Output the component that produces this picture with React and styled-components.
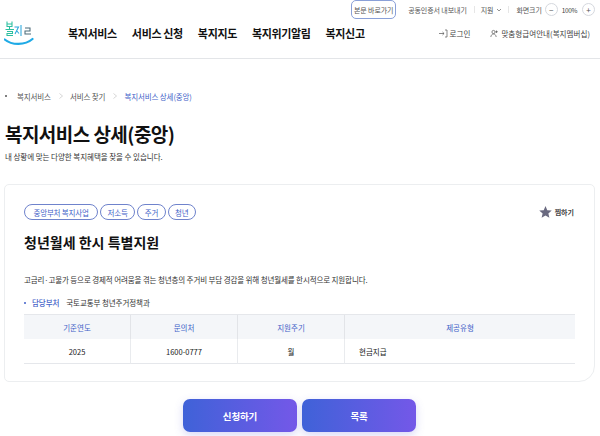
import React from 'react';
import styled, { createGlobalStyle } from 'styled-components';

const Global = createGlobalStyle`
  html, body { margin: 0; padding: 0; background: #fff; }
  body { font-family: "Noto Sans CJK KR", "Noto Sans", sans-serif; color: #111; width: 600px; height: 436px; overflow: hidden; }
`;
const Page = styled.div`width: 600px; height: 436px; overflow: hidden; display: flex; flex-direction: column;`;
const Header = styled.header`height: 58px; border-bottom: 1px solid #e3e5e8; display: flex; flex-direction: column; flex: none;`;
const Util = styled.div`height: 19px; display: flex; align-items: center; justify-content: flex-end; padding-right: 5px; font-size: 7px; color: #555; letter-spacing: -0.1px;`;
const SkipLink = styled.span`width: 43px; height: 17px; margin-right: 12px; border: 1px solid #8aa0d8; border-radius: 5px; display: flex; align-items: center; justify-content: center; color: #555;`;
const UtilItem = styled.span`margin-right: ${p => p.$mr}px; display: flex; align-items: center; gap: 3px;`;
const Sep = styled.i`width: 1px; height: 7px; background: #e6e6e6; margin-right: ${p => p.$mr}px;`;
const RoundBtn = styled.span`width: 11px; height: 11px; border: 1px solid #d5d8de; border-radius: 50%; display: flex; align-items: center; justify-content: center; font-size: 8px; line-height: 1; color: #555;`;
const Zoom = styled.span`margin: 0 5px 0 4px; color: #444; font-size: 6.5px; letter-spacing: -0.4px;`;
const Main = styled.div`flex: 1; display: flex; align-items: flex-start; padding-left: 4px;`;
const Logo = styled.svg`width: 31px; height: 28px; flex: none; margin-right: 33px;`;
const Nav = styled.nav`display: flex; gap: 15px; font-size: 11px; font-weight: 700; color: #111; height: 26px; align-items: center; letter-spacing: -0.35px; margin-top: 1px;`;
const Right = styled.div`margin-left: auto; display: flex; align-items: center; height: 26px; font-size: 7.5px; color: #444; padding-right: 10px; margin-top: 1px; letter-spacing: 0.05px;`;
const RightItem = styled.span`display: flex; align-items: center; gap: 2px; margin-left: ${p => p.$ml || 0}px;`;
const Crumbs = styled.div`display: flex; align-items: center; height: 12px; margin-top: 31px; padding-left: 5px; font-size: 7.5px; color: #555; letter-spacing: -0.12px; flex: none;`;
const Dot = styled.i`width: 2px; height: 2px; background: #555; border-radius: 50%; margin-right: 10px;`;
const Chev = styled.svg`width: 4px; height: 6px; margin: 0 7px 0 8px; flex: none;`;
const Current = styled.span`color: #3f5fc8;`;
const Title = styled.h1`margin: 19px 0 0 5px; font-size: 19px; line-height: 26px; font-weight: 700; color: #111; letter-spacing: -0.55px; flex: none;`;
const Sub = styled.p`margin: 4px 0 0 5px; font-size: 7.5px; line-height: 11px; color: #333; letter-spacing: -0.04px; flex: none;`;
const Card = styled.section`margin: 22px 5px 0 4px; height: 198px; box-sizing: border-box; border: 1px solid #eceef0; border-radius: 5px 5px 16px 5px; padding: 19px 19px 0 19px; flex: none;`;
const TopRow = styled.div`display: flex; align-items: center; height: 16px;`;
const Tags = styled.div`display: flex; gap: 2px;`;
const Tag = styled.span`height: 16px; box-sizing: border-box; padding: 0 ${p => p.$wide ? 8.5 : 6.5}px; border: 1px solid #6f83cc; border-radius: 8px; display: flex; align-items: center; font-size: 7.5px; color: #3f5fc8; letter-spacing: -0.2px;`;
const Fav = styled.span`margin-left: auto; display: flex; align-items: center; gap: 3px; font-size: 7px; font-weight: 700; color: #444; margin-right: 1px;`;
const Name = styled.h2`margin: 6px 0 0; font-size: 14px; line-height: 32px; font-weight: 700; color: #111;`;
const Desc = styled.p`margin: 16px 0 0; font-size: 7.5px; line-height: 12px; color: #333; white-space: nowrap; letter-spacing: -0.12px;`;
const Dept = styled.div`margin-top: 10px; display: flex; align-items: center; height: 12px; font-size: 7.5px; color: #333; letter-spacing: -0.08px;`;
const DeptLabel = styled.span`color: #3f5fc8; font-weight: 500; margin-right: 7px; &::before { content: ""; display: inline-block; width: 2px; height: 2px; border-radius: 50%; background: #3f5fc8; margin: 0 6px 2px 0; }`;
const Table = styled.div`margin-top: 6px; border-top: 1px solid #e5e7eb; display: grid; grid-template-columns: 106px 107px 107px 1fr; font-size: 7.5px;`;
const Th = styled.div`height: 24px; background: #f4f6f9; display: flex; align-items: center; justify-content: center; color: #3f5fc8; border-left: ${p => p.$first ? 'none' : '1px solid #e2e4e8'};`;
const Td = styled.div`height: 24px; display: flex; align-items: center; justify-content: ${p => p.$left ? 'flex-start' : 'center'}; padding-left: ${p => p.$left ? '14px' : '0'}; color: #222; border-bottom: 1px solid #e5e7eb; border-left: ${p => p.$first ? 'none' : '1px solid #e9ebee'};`;
const Buttons = styled.div`margin-top: 17px; display: flex; gap: 5px; padding-left: 183px; flex: none;`;
const Btn = styled.button`width: 114px; height: 33px; border: none; border-radius: 7px; background: linear-gradient(90deg, #3f62d8, #7458e8); color: #fff; font: 700 9.5px "Noto Sans CJK KR", sans-serif; letter-spacing: -0.15px; box-shadow: 0 3px 8px rgba(100, 100, 220, .25);`;

const ChevIcon = () => (
  <Chev viewBox="0 0 4 6"><path d="M.5.5L3.500 3 .5 5.500" fill="none" stroke="#c4c4c4" strokeWidth=".7" /></Chev>
);

export default function App() {
  return (
    <Page>
      <Global />
      <Header>
        <Util>
          <SkipLink>본문 바로가기</SkipLink>
          <UtilItem $mr={7}>공동인증서 내보내기</UtilItem>
          <Sep $mr={6} />
          <UtilItem $mr={6}>지원 <svg width="6" height="4" viewBox="0 0 6 4"><path d="M1 1l2 2 2-2" fill="none" stroke="#666" strokeWidth=".7" /></svg></UtilItem>
          <Sep $mr={7} />
          <UtilItem $mr={3}>화면크기</UtilItem>
          <RoundBtn>−</RoundBtn>
          <Zoom>100%</Zoom>
          <RoundBtn>+</RoundBtn>
        </Util>
        <Main>
          <Logo viewBox="0 0 31 28">
            <path d="M.7 20.500C8 26.500 21 26.500 28.500 20" fill="none" stroke="#1faae6" strokeWidth="2.200" strokeLinecap="round" />
            <path d="M3 2.500v5h5v-5M3 5h5M5.500 7.500v2.500M1.500 10.500h8.500M3 12.500h5.500v2H3v2h6" fill="none" stroke="#2cbfa0" strokeWidth="1.050" />
            <path d="M10.500 8h4l-3.500 7M12.500 11.500l2.500 3M17 6v11" fill="none" stroke="#2ba7dc" strokeWidth="1.050" />
            <path d="M21 9h5v3h-5v3h6" fill="none" stroke="#4a6a78" strokeWidth="1.050" />
          </Logo>
          <Nav>
            <span>복지서비스</span><span>서비스 신청</span><span>복지지도</span><span>복지위기알림</span><span>복지신고</span>
          </Nav>
          <Right>
            <RightItem>
              <svg width="9" height="9" viewBox="0 0 9 9"><path d="M0 4.500h5M3.500 3l1.600 1.500L3.500 6M6 1h2v7H6" fill="none" stroke="#555" strokeWidth=".7" /></svg>
              로그인
            </RightItem>
            <RightItem $ml={20}>
              <svg width="9" height="9" viewBox="0 0 9 9"><circle cx="3.500" cy="3" r="1.600" fill="none" stroke="#555" strokeWidth=".7" /><path d="M.8 8c.3-2 1.300-3 2.700-3s2.400 1 2.700 3M6.500 1.500v2.500M5.500 2.700h2.300" fill="none" stroke="#555" strokeWidth=".7" /></svg>
              맞춤형급여안내(복지멤버십)
            </RightItem>
          </Right>
        </Main>
      </Header>
      <Crumbs>
        <Dot /><span>복지서비스</span><ChevIcon /><span>서비스 찾기</span><ChevIcon /><Current>복지서비스 상세(중앙)</Current>
      </Crumbs>
      <Title>복지서비스 상세(중앙)</Title>
      <Sub>내 상황에 맞는 다양한 복지혜택을 찾을 수 있습니다.</Sub>
      <Card>
        <TopRow>
          <Tags><Tag $wide>중앙부처 복지사업</Tag><Tag>저소득</Tag><Tag>주거</Tag><Tag>청년</Tag></Tags>
          <Fav>
            <svg width="13" height="12" viewBox="0 0 24 23"><path d="M12 0l3.400 8 8.600.7-6.500 5.600 2 8.400L12 18.300 4.500 22.700l2-8.400L0 8.700 8.600 8z" fill="#6a6a80" /></svg>
            찜하기
          </Fav>
        </TopRow>
        <Name>청년월세 한시 특별지원</Name>
        <Desc>고금리·고물가 등으로 경제적 어려움을 겪는 청년층의 주거비 부담 경감을 위해 청년월세를 한시적으로 지원합니다.</Desc>
        <Dept><DeptLabel>담당부처</DeptLabel>국토교통부 청년주거정책과</Dept>
        <Table>
          <Th $first>기준연도</Th><Th>문의처</Th><Th>지원주기</Th><Th>제공유형</Th>
          <Td $first>2025</Td><Td>1600-0777</Td><Td>월</Td><Td $left>현금지급</Td>
        </Table>
      </Card>
      <Buttons><Btn>신청하기</Btn><Btn>목록</Btn></Buttons>
    </Page>
  );
}
